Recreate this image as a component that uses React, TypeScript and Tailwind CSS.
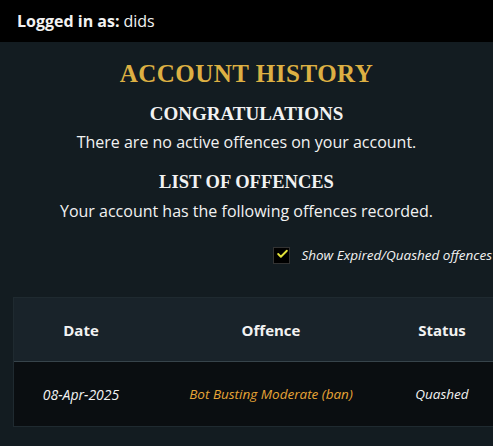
import { Check } from 'lucide-react'

export default function App() {
  return (
    <div className="w-[493px] h-[446px] overflow-hidden bg-[#131c21] text-[#f2f2f2] font-['Open_Sans',sans-serif]">
      <div className="h-[42px] bg-black flex items-center pl-[17px] text-[16px]">
        <span className="font-bold">Logged in as:</span>
        <span className="ml-1">dids</span>
      </div>

      <div className="flex flex-col items-center">
        <h1 className="mt-[17px] text-[25px] leading-[30px] text-[#ddb043] font-['Liberation_Serif',serif] font-bold tracking-[0.5px]">
          ACCOUNT HISTORY
        </h1>
        <h2 className="mt-[13px] text-[19px] leading-[24px] font-['Liberation_Serif',serif] font-bold">
          CONGRATULATIONS
        </h2>
        <p className="mt-[6px] text-[16px] leading-[20px]">There are no active offences on your account.</p>
        <h2 className="mt-[18px] text-[18.5px] leading-[24px] font-['Liberation_Serif',serif] font-bold">
          LIST OF OFFENCES
        </h2>
        <p className="mt-[7px] text-[16px] leading-[20px]">Your account has the following offences recorded.</p>
      </div>

      <div className="flex items-center justify-end mt-[24px] pr-[1px]">
        <div className="w-[17px] h-[17px] bg-black border border-[#333] flex items-center justify-center">
          <Check size={18} strokeWidth={3.5} className="text-[#e3e33a] -mt-[3px] ml-[2px]" />
        </div>
        <span className="ml-[11px] italic text-[13.5px] whitespace-nowrap">Show Expired/Quashed offences</span>
      </div>

      <div className="mt-[32px] ml-[13px] border-l border-t border-[#1f2a30]">
        <div className="grid grid-cols-[134px_246px_96px_1fr] h-[64px] items-center bg-[#19232a] border-b border-[#37444b] text-[15px] font-bold">
          <div className="text-center">Date</div>
          <div className="text-center">Offence</div>
          <div className="text-center">Status</div>
          <div />
        </div>
        <div className="grid grid-cols-[134px_246px_96px_1fr] h-[65px] items-center bg-[#0a0e11] border-b border-[#1f2a30] text-[13.5px] italic">
          <div className="text-center text-[14px]">08-Apr-2025</div>
          <div className="text-center text-[#e7a536]">Bot Busting Moderate (ban)</div>
          <div className="text-center">Quashed</div>
          <div />
        </div>
      </div>
    </div>
  )
}
